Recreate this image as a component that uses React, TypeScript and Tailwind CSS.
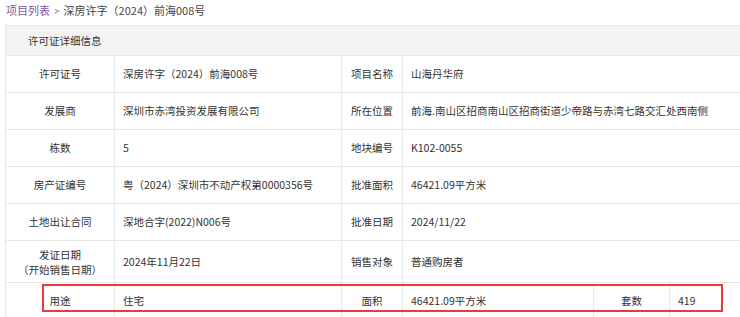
import React from "react";

const rows = [
  ["许可证号", "深房许字（2024）前海008号", "项目名称", "山海丹华府"],
  ["发展商", "深圳市赤湾投资发展有限公司", "所在位置", "前海.南山区招商南山区招商街道少帝路与赤湾七路交汇处西南侧"],
  ["栋数", "5", "地块编号", "K102-0055"],
  ["房产证编号", "粤（2024）深圳市不动产权第0000356号", "批准面积", "46421.09平方米"],
  ["土地出让合同", "深地合字(2022)N006号", "批准日期", "2024/11/22"],
];

const label = "border border-[#e8e8e8] text-center align-middle px-1";
const value = "border border-[#e8e8e8] text-left align-middle pl-2";

export default function App() {
  return (
    <div
      className="w-[740px] h-[317px] overflow-hidden bg-white text-[#333] relative"
      style={{ fontFamily: '"Microsoft YaHei", "Noto Sans CJK SC", sans-serif' }}
    >
      {/* breadcrumb */}
      <div className="h-[25px] pl-[6px] pt-[1px] text-[11px] leading-[18px] text-[#444]">
        <span className="text-[#7d57a5]">项目列表</span>
        <span className="text-[#777] text-[10px] mx-[4px]">&gt;</span>
        <span>深房许字（2024）前海008号</span>
      </div>

      <div className="pl-[5px]">
        <table className="w-[770px] border-collapse table-fixed text-[10.5px]">
          <colgroup>
            <col className="w-[109px]" />
            <col className="w-[227px]" />
            <col className="w-[61px]" />
            <col className="w-[191px]" />
            <col className="w-[76px]" />
            <col />
          </colgroup>
          <tbody>
            <tr className="h-[30px] bg-[#f3f3f3]">
              <td colSpan={6} className="border border-[#e8e8e8] pl-[22px] align-middle">
                许可证详细信息
              </td>
            </tr>
            {rows.map((r, i) => (
              <tr key={i} className="h-[37px]">
                <td className={label}>{r[0]}</td>
                <td className={value}>{r[1]}</td>
                <td className={label}>{r[2]}</td>
                <td colSpan={3} className={value + " whitespace-nowrap"}>
                  {r[3]}
                </td>
              </tr>
            ))}
            <tr className="h-[42px]">
              <td className={label + " leading-[15px]"}>
                发证日期
                <br />
                （开始销售日期）
              </td>
              <td className={value}>2024年11月22日</td>
              <td className={label}>销售对象</td>
              <td colSpan={3} className={value}>
                普通购房者
              </td>
            </tr>
            <tr className="h-[37px]">
              <td className={label}>用途</td>
              <td className={value}>住宅</td>
              <td className={label}>面积</td>
              <td className={value}>46421.09平方米</td>
              <td className={label}>套数</td>
              <td className={value}>419</td>
            </tr>
          </tbody>
        </table>
      </div>

      {/* highlight box */}
      <div className="absolute left-[42px] top-[284px] w-[681px] h-[28px] border-2 border-[#f0373d] pointer-events-none" />
    </div>
  );
}
